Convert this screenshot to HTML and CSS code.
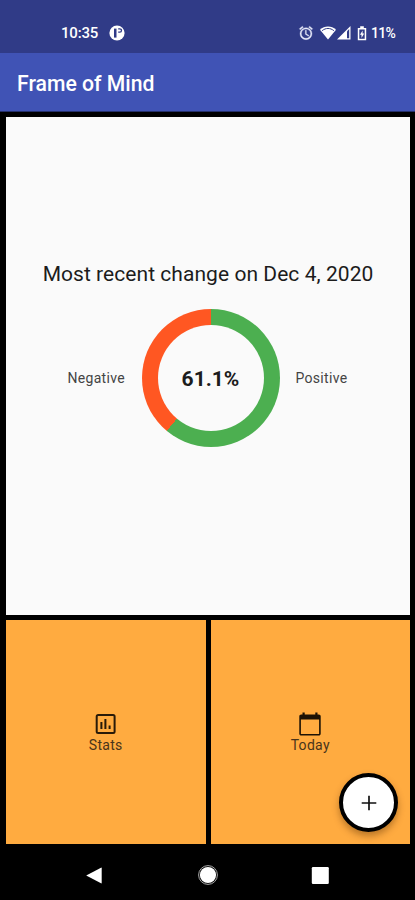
FILE: index.html
```html
<!DOCTYPE html>
<html lang="en">
<head>
<meta charset="utf-8">
<title>Frame of Mind</title>
<link rel="stylesheet" href="styles.css">
</head>
<body>
<div class="screen">
  <div class="status">
    <span class="clock">10:35</span>
    <svg class="notice" viewBox="0 0 16 16"><circle cx="8" cy="8" r="7.6" fill="#fff"/><path d="M5 3.600h2.500v9H5z" fill="#303b87"/><path d="M9.200 3.800h1.600a1.500 1.500 0 0 1 0 3.400H9.200" fill="none" stroke="#303b87" stroke-width="1.300"/></svg>
    <svg class="alarm" viewBox="0 0 24 24"><path fill="#e6e9fa" stroke="#e6e9fa" stroke-width=".5" d="M22 5.700l-4.600-3.900-1.300 1.500 4.600 3.900L22 5.700zM7.900 3.400L6.600 1.900 2 5.700l1.300 1.500 4.600-3.800zM12.500 8H11v6l4.700 2.900.8-1.200-4-2.400V8zM12 4a9 9 0 1 0 0 18 9 9 0 0 0 0-18zm0 16a7 7 0 1 1 0-14 7 7 0 0 1 0 14z"/></svg>
    <svg class="wifi" viewBox="0 0 16 14"><path d="M0 3.800C4.600-.6 11.400-.6 16 3.800L8 13.500z" fill="#fff"/><path d="M2.100 4.700C5.800 1.700 10.200 1.700 13.900 4.700" fill="none" stroke="#303b87" stroke-width="1"/></svg>
    <svg class="signal" viewBox="0 0 14 14"><path d="M13.500 0v13.500H0z" fill="#fff"/><path d="M10 5.200l2.200-2.200v9.200H10z" fill="#303b87"/></svg>
    <svg class="battery" viewBox="0 0 10 15"><path d="M3.200 .3h3.600v1.600h2.400v12.400H.8V1.900h2.400z" fill="#fff"/><path d="M2.300 3.500h5.400v9.300H2.300z" fill="#303b87"/><path d="M5.600 4.500L3 8.700h1.500v3.200L7.200 7.600H5.600z" fill="#fff"/></svg>
    <span class="percent">11%</span>
  </div>
  <header class="appbar"><h1>Frame of Mind</h1></header>
  <main class="board">
    <section class="summary">
      <h2>Most recent change on Dec 4, 2020</h2>
      <div class="chart">
        <span class="side negative">Negative</span>
        <div class="donut"><div class="hole"><b>61.1%</b></div></div>
        <span class="side positive">Positive</span>
      </div>
    </section>
    <div class="tiles">
      <section class="tile">
        <svg class="icon" viewBox="0 0 24 24"><rect x="2.700" y="3" width="17.900" height="17.900" rx="1.500" fill="none" stroke="#291a08" stroke-width="2"/><path d="M6.400 10h2v7h-2zM10.400 7h2v10h-2zM14.600 13.500h2V17h-2z" fill="#291a08"/></svg>
        <span>Stats</span>
      </section>
      <section class="tile">
        <svg class="icon" viewBox="0 0 24 24"><path fill="#1c1205" d="M20.800 2.500h-1.300V.5h-2.200v2H6.700V.5H4.500v2H3.200C2.200 2.500 1.300 3.300 1.300 4.300v17.400c0 1 .9 1.800 1.900 1.800h17.600c1 0 1.900-.8 1.900-1.800V4.300c0-1-.9-1.800-1.900-1.800zm.3 19.500H2.900V7.500h18.200z"/></svg>
        <span>Today</span>
      </section>
    </div>
  </main>
  <nav class="nav">
    <svg viewBox="0 0 20 20"><path d="M1.200 10.500L16 2.700q.7-.3.700.5v14.600q0 .8-.7.500z" fill="#fff"/></svg>
    <svg viewBox="0 0 20 20"><circle cx="10" cy="10" r="9.400" fill="none" stroke="#aaa" stroke-width="1"/><circle cx="10" cy="10" r="8.100" fill="#fff"/></svg>
    <svg viewBox="0 0 20 20"><rect x="1.800" y="2" width="17" height="17" rx="1.200" fill="#fff"/></svg>
  </nav>
  <button class="fab" aria-label="Add"><svg viewBox="0 0 16 16"><path d="M8 .7v14.600M.7 8h14.600" stroke="#111" stroke-width="1.700"/></svg></button>
</div>
</body>
</html>
```
FILE: styles.css
```css
* { box-sizing: border-box; }
body { margin: 0; font-family: Roboto, "Liberation Sans", sans-serif; }
svg { display: block; flex: none; }
h1, h2 { margin: 0; }

.screen {
  position: relative;
  display: flex;
  flex-direction: column;
  width: 415px;
  height: 900px;
  overflow: hidden;
  background: #000;
}

.status {
  display: flex;
  align-items: center;
  height: 53px;
  padding: 13px 19px 0 61px;
  background: #303b87;
  color: #fff;
  font-size: 15px;
  font-weight: 500;
}
.clock { width: 48px; letter-spacing: -0.2px; }
.notice { width: 16px; height: 16px; }
.alarm { width: 16px; height: 16px; margin-left: auto; }
.wifi { width: 16px; height: 14px; margin-left: 6px; }
.signal { width: 14px; height: 14px; margin-left: 1px; }
.battery { width: 10px; height: 15px; margin-left: 6px; }
.percent { width: 25px; margin-left: 4px; font-size: 14px; letter-spacing: -0.7px; }

.appbar {
  display: flex;
  align-items: center;
  height: 59px;
  padding: 3px 17px 0;
  background: #4053b5;
  border-bottom: 1px solid #25306b;
  color: #fff;
}
.appbar h1 { font-size: 21.200px; font-weight: 500; white-space: nowrap; }

.board {
  display: flex;
  flex-direction: column;
  gap: 5px;
  height: 732px;
  padding: 5px 5px 0 6px;
}
.summary {
  display: flex;
  flex-direction: column;
  align-items: center;
  height: 498px;
  padding-top: 144px;
  background: #fafafa;
  color: #1c1c1c;
}
.summary h2 {
  font-size: 21px;
  font-weight: 400;
  line-height: 27px;
  letter-spacing: 0.050px;
  white-space: nowrap;
}
.chart { display: flex; align-items: center; margin-top: 21px; }
.side { width: 58px; font-size: 14px; color: #444; letter-spacing: 0.3px; }
.negative { margin-left: 5px; }
.donut {
  display: grid;
  place-items: center;
  width: 138px;
  height: 138px;
  margin: 0 16px;
  border-radius: 50%;
  background: conic-gradient(#4caf50 61.1%, #ff5722 0);
}
.hole {
  display: grid;
  place-items: center;
  width: 106px;
  height: 106px;
  padding-top: 1px;
  border-radius: 50%;
  background: #fafafa;
  font-size: 21px;
}
.hole b { letter-spacing: 0; }

.tiles { display: grid; grid-template-columns: 199.500px 199.500px; gap: 5px; height: 224px; }
.tile {
  display: flex;
  flex-direction: column;
  align-items: center;
  padding-top: 92px;
  background: #ffab40;
  color: #49341a;
  font-size: 14px;
  line-height: 19px;
  letter-spacing: 0.3px;
}
.icon { width: 24px; height: 24px; }

.nav {
  display: flex;
  align-items: center;
  justify-content: space-between;
  height: 56px;
  padding: 6px 85px 0;
}
.nav svg { width: 20px; height: 20px; }

.fab {
  position: absolute;
  left: 339px;
  top: 773px;
  display: grid;
  place-items: center;
  width: 59px;
  height: 59px;
  padding: 0;
  border: 4px solid #000;
  border-radius: 50%;
  background: #fff;
  box-shadow: 0 4px 7px rgba(80, 40, 0, 0.4);
}
.fab svg { width: 16px; height: 16px; }
```
